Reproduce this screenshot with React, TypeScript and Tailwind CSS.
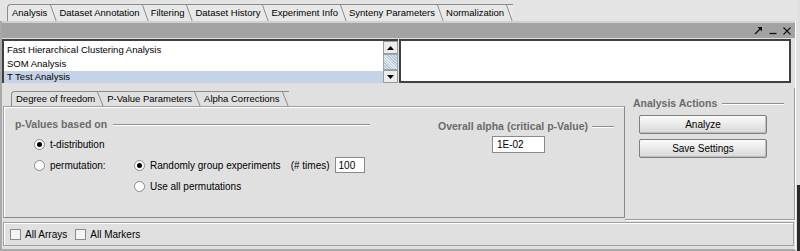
import React from "react";

const F = "font-['Liberation_Sans',Arial,sans-serif]";

function Slant({ h = 18 }: { h?: number }) {
  return (
    <svg width="7" height={h} className="shrink-0 block" viewBox={`0 0 7 ${h}`}>
      <path d={`M0.5 0 L6.5 ${h}`} stroke="#8c8c8c" strokeWidth="1" fill="none" />
    </svg>
  );
}

function TopTabs() {
  const tabs = [
    "Analysis",
    "Dataset Annotation",
    "Filtering",
    "Dataset History",
    "Experiment Info",
    "Synteny Parameters",
    "Normalization",
  ];
  return (
    <div className="h-[21px] flex items-end pl-[7px] bg-[#e4e4e4]">
      <div className="flex h-[17px] border-l border-t border-[#8c8c8c] rounded-tl-[4px] bg-[#e8e8e8]">
        {tabs.map((t, i) => (
          <div key={t} className="flex items-stretch">
            <div className={`flex items-center text-[9.5px] text-black leading-none ${i === 0 ? "pl-[4px] pr-[3px]" : "pl-[2px] pr-[2px]"}`}>
              {t}
            </div>
            <Slant h={17} />
          </div>
        ))}
      </div>
    </div>
  );
}

function Radio({ on }: { on?: boolean }) {
  return (
    <div className="w-[11px] h-[11px] rounded-full border border-[#8a8a8a] bg-white flex items-center justify-center shrink-0">
      {on && <div className="w-[5px] h-[5px] rounded-full bg-black" />}
    </div>
  );
}

function Checkbox() {
  return <div className="w-[11px] h-[11px] border border-[#8a8a8a] bg-[#f4f4f4] shrink-0" />;
}

function Button({ label }: { label: string }) {
  return (
    <div className="w-[128px] h-[19px] border border-[#7f7f7f] rounded-[2px] bg-[linear-gradient(#fbfbfb,#e6e6e6_60%,#d8d8d8)] flex items-center justify-center text-[10px] text-black shadow-[inset_-1px_-1px_0_#bdbdbd]">
      {label}
    </div>
  );
}

export default function App() {
  return (
    <div className={`${F} w-[800px] h-[251px] bg-[#e0e0e0] overflow-hidden flex text-black`}>
      <div className="w-[797px] h-full flex flex-col">
        <TopTabs />
        <div className="flex-1 flex flex-col border-l-2 border-b-2 border-[#a9a9a9] border-r border-r-[#ffffff] mr-[1px]">
          {/* title bar */}
          <div className="h-[17px] bg-[#a3a3a3] border-t-2 border-[#d0d0d0] flex items-center justify-end pr-[4px] gap-[6px]">
            <svg width="9" height="9" viewBox="0 0 9 9">
              <path d="M1 8 L7 2" stroke="#111" strokeWidth="1.2" />
              <path d="M3.5 1 L8 1 L8 5.5 Z" fill="#111" />
            </svg>
            <svg width="8" height="9" viewBox="0 0 8 9">
              <path d="M0.5 7.5 L7.5 7.5" stroke="#111" strokeWidth="1.3" />
            </svg>
            <svg width="8" height="8" viewBox="0 0 8 8">
              <path d="M0.5 0.5 L7.5 7.5 M7.5 0.5 L0.5 7.5" stroke="#111" strokeWidth="1.1" />
            </svg>
          </div>
          {/* list area */}
          <div className="h-[46px] flex pt-[1px] pr-[4px]">
            <div className="w-[381px] h-[44px] border-l-2 border-t-2 border-[#404040] bg-white flex flex-col pt-[2px] text-[9.5px] leading-[14px]">
              <div className="pl-[3px] h-[14px]">Fast Hierarchical Clustering Analysis</div>
              <div className="pl-[3px] h-[14px]">SOM Analysis</div>
              <div className="pl-[3px] h-[12px] leading-[12px] bg-[#c4d3e8]">T Test Analysis</div>
            </div>
            <div className="w-[15px] h-[44px] flex flex-col bg-[#e6e6e6] border-t-2 border-[#404040]">
              <div className="h-[13px] border border-[#9a9a9a] bg-[#ececec] flex items-center justify-center">
                <svg width="7" height="4" viewBox="0 0 7 4"><path d="M0 4 L3.5 0 L7 4 Z" fill="#000" /></svg>
              </div>
              <div className="h-[16px] border border-[#9aa6b6] bg-[repeating-linear-gradient(45deg,#b8c6d8_0px,#b8c6d8_1px,#e4ecf4_1px,#e4ecf4_2px)]" />
              <div className="h-[13px] border border-[#9a9a9a] bg-[#ececec] flex items-center justify-center">
                <svg width="7" height="4" viewBox="0 0 7 4"><path d="M0 0 L3.5 4 L7 0 Z" fill="#000" /></svg>
              </div>
            </div>
            <div className="flex-1 h-[44px] ml-[1px] border-2 border-[#404040] bg-white" />
          </div>
          {/* main row */}
          <div className="h-[133px] mt-[4px] flex">
            {/* left tabbed pane */}
            <div className="w-[622px] ml-[1px] flex flex-col">
              <div className="h-[18px] flex items-end pl-[8px]">
                <div className="flex h-[15px] border-l border-t border-[#8c8c8c] rounded-tl-[4px]">
                  {["Degree of freedom", "P-Value Parameters", "Alpha Corrections"].map((t, i) => (
                    <div key={t} className="flex items-stretch">
                      <div className={`flex items-center text-[9.5px] leading-none ${i === 0 ? "pl-[4px] pr-[2px]" : "pl-[3px] pr-[2px]"}`}>{t}</div>
                      <Slant h={15} />
                    </div>
                  ))}
                </div>
              </div>
              <div className="h-[112px] border-t border-l border-[#a0a0a0] border-r border-b border-r-[#8a8a8a] border-b-[#8a8a8a] shadow-[inset_1px_1px_0_#ffffff] flex">
                {/* left column */}
                <div className="w-[366px] flex flex-col pt-[11px]">
                  <div className="h-[14px] flex items-center pl-[11px]">
                    <span className="text-[10.5px] font-bold text-[#6b6b6b] whitespace-nowrap">p-Values based on</span>
                    <div className="flex-1 ml-[6px] h-[2px] border-t border-[#8f8f8f] border-b border-b-white" />
                  </div>
                  <div className="h-[14px] mt-[5px] flex items-center pl-[30px] gap-[5px] text-[10px]">
                    <Radio on />
                    <span>t-distribution</span>
                  </div>
                  <div className="h-[16px] mt-[6px] flex items-center pl-[30px] text-[10px]">
                    <div className="w-[100px] flex items-center gap-[5px]">
                      <Radio />
                      <span>permutation:</span>
                    </div>
                    <div className="flex items-center gap-[5px]">
                      <Radio on />
                      <span className="whitespace-nowrap">Randomly group experiments</span>
                    </div>
                    <span className="ml-[10px] whitespace-nowrap">(# times)</span>
                    <div className="ml-[5px] w-[30px] h-[16px] border border-[#8a8a8a] bg-white flex items-center pl-[3px]">100</div>
                  </div>
                  <div className="h-[14px] mt-[6px] flex items-center pl-[130px] gap-[5px] text-[10px]">
                    <Radio />
                    <span>Use all permutations</span>
                  </div>
                </div>
                {/* right column */}
                <div className="flex-1 flex flex-col pt-[13px] pr-[10px]">
                  <div className="h-[14px] flex items-center justify-end">
                    <span className="text-[10.5px] font-bold text-[#6b6b6b] whitespace-nowrap">Overall alpha (critical p-Value)</span>
                    <div className="w-[22px] ml-[4px] h-[2px] border-t border-[#8f8f8f] border-b border-b-white" />
                  </div>
                  <div className="mt-[2px] pl-[122px]">
                    <div className="w-[53px] h-[17px] border border-[#8a8a8a] bg-white flex items-center pl-[4px] text-[10px]">1E-02</div>
                  </div>
                </div>
              </div>
            </div>
            {/* right panel */}
            <div className="flex-1 h-[132px] border-r border-b border-[#9a9a9a] shadow-[1px_1px_0_#ffffff] flex flex-col pt-[9px] pl-[8px] pr-[10px]">
              <div className="h-[14px] flex items-center">
                <span className="text-[10.5px] font-bold text-[#6b6b6b] whitespace-nowrap">Analysis Actions</span>
                <div className="flex-1 ml-[5px] h-[2px] border-t border-[#8f8f8f] border-b border-b-white" />
              </div>
              <div className="mt-[4px] pl-[6px] flex flex-col gap-[5px]">
                <Button label="Analyze" />
                <Button label="Save Settings" />
              </div>
            </div>
          </div>
          {/* bottom bar */}
          <div className="h-[24px] mt-[1px] mx-[1px] mb-[1px] border border-[#a0a0a0] shadow-[inset_1px_1px_0_#ffffff] flex items-center pl-[6px] text-[10px]">
            <Checkbox />
            <span className="ml-[4px]">All Arrays</span>
            <div className="ml-[8px]"><Checkbox /></div>
            <span className="ml-[4px]">All Markers</span>
          </div>
        </div>
      </div>
      <div className="w-[3px] h-full flex flex-col">
        <div className="h-[185px]" />
        <div className="flex-1 bg-[#2a2a2a]" />
      </div>
    </div>
  );
}
